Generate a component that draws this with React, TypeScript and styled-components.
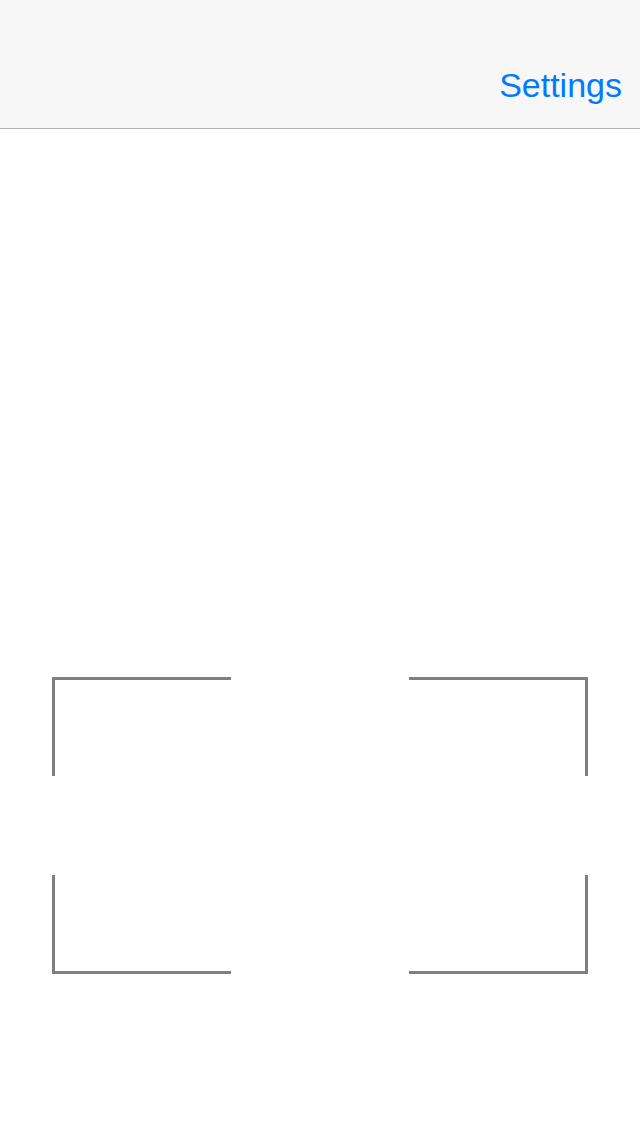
import React from 'react'
import styled, { createGlobalStyle } from 'styled-components'

type Side = 'top' | 'bottom'
type Edge = 'left' | 'right'

interface CornerProps {
  readonly $v: Side
  readonly $h: Edge
}

const GlobalStyle = createGlobalStyle`
  html, body {
    margin: 0;
    padding: 0;
    background: #ffffff;
    font-family: 'Liberation Sans', Arial, sans-serif;
  }
`

const App: React.FC = () => {
  return (
    <>
      <GlobalStyle />
      <StyledScreen>
        <StyledNavBar>
          <StyledNavButton>Settings</StyledNavButton>
        </StyledNavBar>
        <StyledContent>
          <StyledViewfinder>
            <StyledCorner $v='top' $h='left' />
            <StyledCorner $v='top' $h='right' />
            <StyledCorner $v='bottom' $h='left' />
            <StyledCorner $v='bottom' $h='right' />
          </StyledViewfinder>
        </StyledContent>
      </StyledScreen>
    </>
  )
}

const StyledScreen = styled.div`
  width: 640px;
  height: 1136px;
  display: flex;
  flex-direction: column;
  background: #ffffff;
  overflow: hidden;
`

const StyledNavBar = styled.div`
  height: 129px;
  box-sizing: border-box;
  padding: 68px 18px 0 0;
  display: flex;
  justify-content: flex-end;
  align-items: flex-start;
  background: #f7f7f7;
  border-bottom: 1px solid #b2b2b2;
  flex-shrink: 0;
`

const StyledNavButton = styled.div`
  font-size: 34px;
  line-height: 1;
  color: #007aff;
  cursor: pointer;
`

const StyledContent = styled.div`
  flex: 1;
  display: flex;
  justify-content: center;
  padding-top: 548px;
`

const StyledViewfinder = styled.div`
  width: 536px;
  height: 297px;
  display: grid;
  grid-template-columns: 179px 1fr 179px;
  grid-template-rows: 99px 1fr 99px;
`

const StyledCorner = styled.div<CornerProps>`
  grid-row: ${(p) => (p.$v === 'top' ? 1 : 3)};
  grid-column: ${(p) => (p.$h === 'left' ? 1 : 3)};
  border-color: #808080;
  border-style: solid;
  border-width: 0;
  border-${(p) => p.$v}-width: 3px;
  border-${(p) => p.$h}-width: 3px;
`

export default App
